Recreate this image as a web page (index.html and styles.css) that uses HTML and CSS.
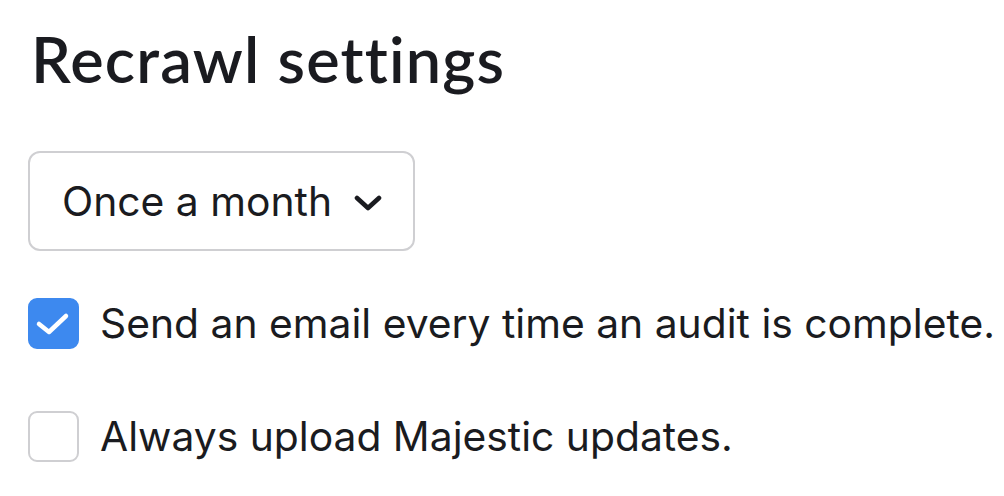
FILE: index.html
```html
<!DOCTYPE html>
<html>
<head>
<meta charset="utf-8">
<link rel="stylesheet" href="styles.css">
</head>
<body>
<main class="settings">
  <h1 class="title">Recrawl settings</h1>
  <div class="select">
    <span class="select-label">Once a month</span>
    <svg class="chevron" width="28" height="20" viewBox="0 0 28 20"><path d="M3 5 L14 15 L25 5" fill="none" stroke="#1a1b20" stroke-width="4.6" stroke-linecap="round" stroke-linejoin="round"/></svg>
  </div>
  <label class="option">
    <span class="box box-checked">
      <svg width="50" height="50" viewBox="0 0 50 50"><path d="M11 26 L21 34 L38 18" fill="none" stroke="#fff" stroke-width="4.5" stroke-linecap="round" stroke-linejoin="round"/></svg>
    </span>
    <span class="option-text">Send an email every time an audit is complete.</span>
  </label>
  <label class="option">
    <span class="box"></span>
    <span class="option-text">Always upload Majestic updates.</span>
  </label>
</main>
</body>
</html>
```

FILE: styles.css
```css
* { box-sizing: border-box; }
html, body { margin: 0; background: #fff; }
body { font-family: Inter, "Noto Sans", sans-serif; color: #1a1b20; }
.settings { padding: 20px 0 0 28px; display: flex; flex-direction: column; align-items: flex-start; }
.title { margin: 0; font-family: Lato, Inter, sans-serif; font-weight: 600; font-size: 63px; line-height: 78px; letter-spacing: 1.2px; padding-left: 3px; }
.select { margin-top: 53px; width: 387px; height: 100px; border: 2px solid #cfcfd2; border-radius: 12px; display: flex; align-items: center; padding-left: 32px; gap: 22px; }
.select-label { font-size: 40.8px; font-weight: 400; line-height: 1; }
.chevron { margin-top: 4px; }
.option { display: flex; align-items: center; gap: 21px; }
.option + .option { margin-top: 62px; }
.select + .option { margin-top: 47px; }
.box { width: 51px; height: 51px; border-radius: 9px; border: 2px solid #cfcfd2; flex: none; display: flex; }
.box-checked { background: #3d89ef; border-color: #3d89ef; }
.box-checked svg { margin: -2px; }
.option-text { font-size: 40.8px; line-height: 1; }
```
